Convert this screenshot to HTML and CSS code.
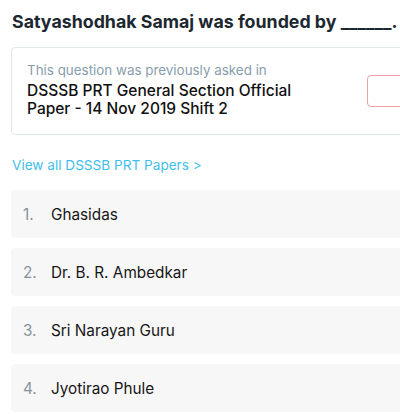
FILE: index.html
```html
<!DOCTYPE html>
<html lang="en">
<head>
    <meta charset="UTF-8">
    <meta name="viewport" content="width=device-width, initial-scale=1.0">
    <title>Question</title>
    <link rel="stylesheet" href="styles.css">
</head>
<body>
    <div class="question-page">
        <h1 class="question-title">Satyashodhak Samaj was founded by ______.</h1>

        <div class="source-card">
            <div class="source-info">
                <p class="source-label">This question was previously asked in</p>
                <p class="source-paper">DSSSB PRT General Section Official Paper - 14 Nov 2019 Shift 2</p>
            </div>
            <div class="source-action"></div>
        </div>

        <a class="papers-link" href="#">View all DSSSB PRT Papers &gt;</a>

        <ol class="options">
            <li class="option"><span class="option-num">1.</span><span class="option-text">Ghasidas</span></li>
            <li class="option"><span class="option-num">2.</span><span class="option-text">Dr. B. R. Ambedkar</span></li>
            <li class="option"><span class="option-num">3.</span><span class="option-text">Sri Narayan Guru</span></li>
            <li class="option"><span class="option-num">4.</span><span class="option-text">Jyotirao Phule</span></li>
        </ol>
    </div>
</body>
</html>
```

FILE: styles.css
```css
* {
    margin: 0;
    padding: 0;
    box-sizing: border-box;
}

html, body {
    overflow: hidden;
}

body {
    font-family: 'Inter', 'Liberation Sans', Arial, sans-serif;
    background: #ffffff;
    color: #1f2a30;
}

.question-page {
    width: 440px;
    padding: 12px 0 0 11px;
}

.question-title {
    font-size: 17.8px;
    font-weight: bold;
    line-height: 20px;
    color: #1c2830;
    white-space: nowrap;
    padding-left: 1px;
}

.source-card {
    display: flex;
    align-items: flex-start;
    margin-top: 15px;
    height: 88px;
    padding: 14px 0 0 15px;
    border: 1px solid #e3e8ea;
    border-radius: 4px;
}

.source-info {
    width: 300px;
    flex-shrink: 0;
}

.source-label {
    font-size: 13.4px;
    line-height: 16px;
    color: #879eab;
}

.source-paper {
    margin-top: 4px;
    font-size: 15.5px;
    font-weight: 500;
    line-height: 18px;
    color: #111;
}

.source-action {
    flex-shrink: 0;
    width: 80px;
    height: 32px;
    margin: 13px 0 0 40px;
    border: 1px solid #f2a0a3;
    border-radius: 4px;
}

.papers-link {
    display: block;
    margin-top: 22px;
    padding-left: 1px;
    font-size: 13.6px;
    line-height: 16px;
    color: #3fc0ec;
    text-decoration: none;
}

.options {
    list-style: none;
    margin-top: 17px;
    display: flex;
    flex-direction: column;
    gap: 10px;
}

.option {
    display: flex;
    align-items: center;
    height: 48px;
    padding-left: 12px;
    background: #f7f7f7;
    border-radius: 4px;
    font-size: 15.3px;
}

.option-num {
    width: 28px;
    color: #86939b;
}

.option-text {
    color: #161616;
}
```
